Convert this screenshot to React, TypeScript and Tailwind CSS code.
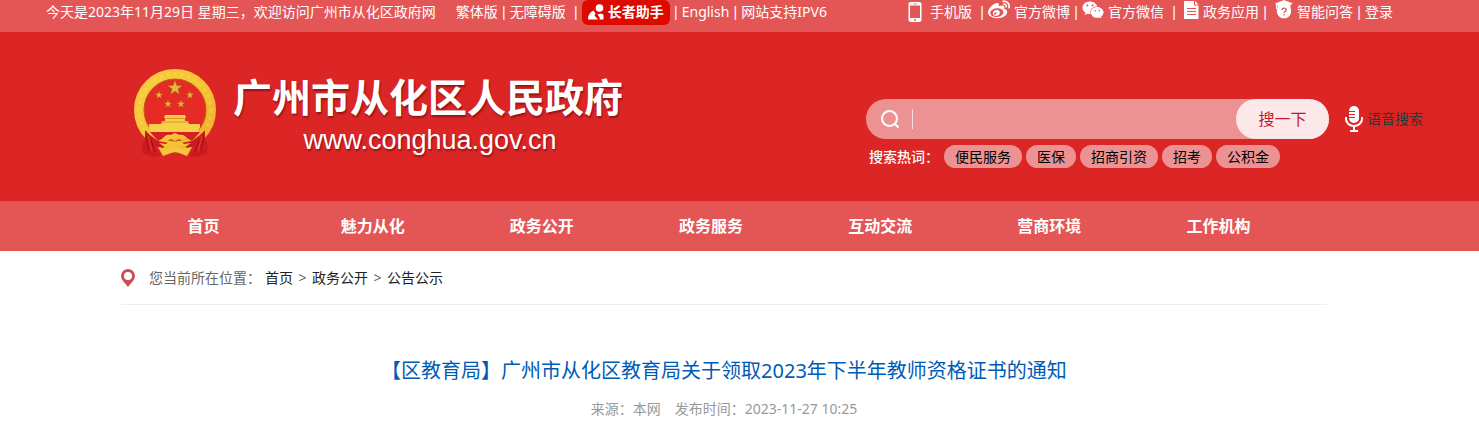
import type { FormEvent, ReactNode } from 'react';
import { FaWeixin, FaWeibo } from 'react-icons/fa';

const navItems = ['首页', '魅力从化', '政务公开', '政务服务', '互动交流', '营商环境', '工作机构'];

const hotWords = ['便民服务', '医保', '招商引资', '招考', '公积金'];

const crumbs = ['首页', '政务公开', '公告公示'];

function Sep() {
  return (
    <span aria-hidden className="w-3 text-center font-['Liberation_Sans']">
      |
    </span>
  );
}

function TopLink({ icon, children }: { icon?: ReactNode; children: ReactNode }) {
  return (
    <a href="#" className="flex items-center gap-1 hover:underline">
      {icon}
      <span>{children}</span>
    </a>
  );
}

function ElderIcon() {
  return (
    <svg width="16" height="16" viewBox="0 0 16 16" fill="#fff" aria-hidden>
      <circle cx="11.500" cy="4" r="3.800" />
      <path d="M0 15.500C0 11.500 2 8 5.500 6.500L7.500 9.500 6.500 11.500 10 15.500Z" />
      <path d="M9.500 10.500c2-1.200 5.500-1 6 .500v4.500h-4c1-1.500-.5-3-2-5z" />
    </svg>
  );
}

function PhoneIcon() {
  return (
    <svg width="14" height="20" viewBox="0 0 14 20" aria-hidden className="mr-1">
      <path
        fill="#fff"
        fillRule="evenodd"
        d="M2.500 0h9A2 2 0 0 1 13.500 2v16a2 2 0 0 1-2 2h-9a2 2 0 0 1-2-2V2a2 2 0 0 1 2-2zM2 3.500v12.500h10v-12.500zM5 1.500v.8h4v-.8zM7 17a1 1 0 1 0 0 2a1 1 0 0 0 0-2z"
      />
    </svg>
  );
}

function DocIcon() {
  return (
    <svg width="15" height="18" viewBox="0 0 15 18" className="mb-1" aria-hidden>
      <path fill="#fff" d="M0 0h10v4.500h4.500V18H0zM11 0l3.500 3.500H11z" />
      <path stroke="#e45656" d="M3 7.500h9M3 10.500h9M3 13.500h9" />
    </svg>
  );
}

function GraduateIcon() {
  return (
    <svg width="18" height="20" viewBox="0 0 18 20" className="mb-1" aria-hidden>
      <path fill="#fff" d="M9 0l9 3.500-2.500 1.200V8A7.200 7.200 0 1 1 2.500 8V5.200L2 5v4H1V4.500L0 3.500z" />
      <path
        fill="none"
        stroke="#e45656"
        strokeWidth="1.400"
        d="M7 10c0-2.500 4.200-2.500 4.200 0c0 1.500-2.100 1.500-2.100 3M9.100 14v1.500"
      />
    </svg>
  );
}

function MicIcon() {
  return (
    <svg width="18" height="26" viewBox="0 0 18 26" fill="none" aria-hidden>
      <rect x="4" y="0" width="10" height="17" rx="5" fill="#fff" />
      <path stroke="#dc2626" d="M4 5.500h6M4 8.500h6M4 11.500h6" />
      <path stroke="#fff" strokeWidth="2" d="M1 11v2a8 7 0 0 0 16 0v-2M9 20v5M5 25h8" />
    </svg>
  );
}

function Emblem() {
  const star = 'M0-10L2.400-3.100 9.500-3.100 3.800 1.200 5.900 8.100 0 4-5.900 8.100-3.800 1.200-9.500-3.100-2.400-3.100Z';
  return (
    <svg width="84" height="90" viewBox="0 0 84 90" role="img" aria-label="国徽">
      <defs>
        <linearGradient id="gold" x1="0" y1="0" x2="1" y2="1">
          <stop offset="0" stopColor="#f9cf3f" />
          <stop offset="0.500" stopColor="#f5c335" />
          <stop offset="1" stopColor="#efb02a" />
        </linearGradient>
      </defs>
      <circle cx="42" cy="42" r="32" fill="#e62a26" />
      <circle cx="42" cy="42" r="36" fill="none" stroke="url(#gold)" strokeWidth="10" />
      <circle cx="42" cy="42" r="31" fill="none" stroke="#b9601c" strokeWidth="1" />
      <circle cx="42" cy="42" r="36" fill="none" stroke="#fbdc62" strokeWidth="3" strokeDasharray="3 4" opacity="0.400" />
      <g fill="#e8b43c" stroke="#8f5a22" strokeWidth="0.600">
        <path d={star} transform="translate(42 20) scale(.8)" />
        <path d={star} transform="translate(26 27) scale(.42)" />
        <path d={star} transform="translate(57 27) scale(.42)" />
        <path d={star} transform="translate(35 36) scale(.42)" />
        <path d={star} transform="translate(48 36) scale(.42)" />
      </g>
      <path fill="#f7cf48" d="M32 47h20l1 3h-1v3h3l1 3h11v3l-2 5H18l-2-5v-3h12l1-3h3v-3h-1z" />
      <path stroke="#d8861e" strokeWidth="0.800" d="M32 50.500h20M29 54h26" />
      <path fill="#d42022" d="M17 64h50l-8 9-9-5-8-3-8 3-9 5z" />
      {/* ribbons hanging from both sides of the wheat ring */}
      <path fill="#cc1b20" d="M12 62l5 5 8 6 11 2-6 5-8-1 6 9-9 1-4-2-5-1-1-8 3-7zM72 62l-5 5-8 6-11 2 6 5 8-1-6 9 9 1 4-2 5-1 1-8-3-7z" />
      <path fill="none" stroke="#9c1016" d="M13 68l3 15M18 72l4 12M71 68l-3 15M66 72l-4 12" />
      <path fill="none" stroke="#ef3a34" d="M15 68l4 15M69 68l-4 15" />
      {/* bow and gear at the foot */}
      <path fill="url(#gold)" d="M29 71c3-4 6-5 9-4l4-2 4 2c3-1 6 0 9 4l-4 3-5-3-4 2-4-2-5 3z" />
      <path fill="url(#gold)" d="M33 76l4-3 5 2 5-2 4 3 7-1-7 5-5-1-4-1-4 1-5 1-7-5z" />
      <path fill="#f4c63e" d="M25 79l9 2c5-3 11-3 16 0l9-2-5 9-8-3c-3-1-5-1-8 0l-8 3z" />
    </svg>
  );
}

function TopBar() {
  return (
    <div className="flex h-8 flex-wrap justify-between bg-[#e45656] pr-[86px] pl-[46px] text-sm text-white">
      <div className="flex h-6 items-center">
        <span className="mr-5">今天是2023年11月29日 星期三，欢迎访问广州市从化区政府网</span>
        <TopLink>繁体版</TopLink>
        <Sep />
        <TopLink>无障碍版</TopLink>
        <span className="ml-1 flex">
          <Sep />
        </span>
        <button
          type="button"
          className="flex h-[25px] items-center gap-1 rounded-md bg-[#dd0a00] px-1.5 font-bold whitespace-nowrap"
        >
          <ElderIcon />
          <span>长者助手</span>
        </button>
        <Sep />
        <TopLink>English</TopLink>
        <Sep />
        <TopLink>网站支持IPV6</TopLink>
      </div>
      <div className="flex h-6 items-center">
        <TopLink icon={<PhoneIcon />}>手机版</TopLink>
        <span className="ml-1 flex">
          <Sep />
        </span>
        <TopLink icon={<FaWeibo size={22} className="mb-1" />}>官方微博</TopLink>
        <Sep />
        <TopLink icon={<FaWeixin size={22} className="mb-1" />}>官方微信</TopLink>
        <span className="mr-1 ml-1 flex">
          <Sep />
        </span>
        <TopLink icon={<DocIcon />}>政务应用</TopLink>
        <span className="mr-1 flex">
          <Sep />
        </span>
        <TopLink icon={<GraduateIcon />}>智能问答</TopLink>
        <Sep />
        <TopLink>登录</TopLink>
      </div>
    </div>
  );
}

function SearchBox() {
  const handleSubmit = (event: FormEvent) => event.preventDefault();

  return (
    <div className="pt-[67px]">
      <div className="flex items-center gap-4">
        <form
          onSubmit={handleSubmit}
          className="flex h-10 w-[463px] items-center rounded-full bg-[#ed9292]"
        >
          <svg width="20" height="20" viewBox="0 0 20 20" fill="none" stroke="#fff" strokeWidth="2" className="ml-3.5 shrink-0" aria-hidden>
            <circle cx="9.500" cy="9.500" r="7.500" />
            <path d="M14.500 14.500l4 4" />
          </svg>
          <span className="ml-3 h-5 w-px bg-white/70" />
          <input type="text" aria-label="搜索" className="h-10 min-w-0 flex-1 px-3 text-sm text-white outline-none" />
          <button type="submit" className="h-10 w-[93px] rounded-full bg-[#fce8e8] text-base text-[#c01830]">
            搜一下
          </button>
        </form>
        <a href="#" className="flex items-center gap-1 text-sm text-[#333]">
          <MicIcon />
          <span>语音搜索</span>
        </a>
      </div>
      <div className="mt-1.5 flex items-center gap-1 pl-[3px] text-sm">
        <span className="mr-px font-medium text-white">搜索热词：</span>
        {hotWords.map((word) => (
          <a key={word} href="#" className="h-[23px] rounded-full bg-[#ed9292] px-[11px] leading-[23px] text-black">
            {word}
          </a>
        ))}
      </div>
    </div>
  );
}

function Header() {
  return (
    <header className="bg-[#dc2626]">
      <TopBar />
      <div className="flex h-[169px] justify-between pr-14 pl-[133px]">
        <a href="#" className="flex items-start gap-4 pt-9 text-white">
          <Emblem />
          <span className="flex flex-col items-center pt-1.5 [text-shadow:1px_2px_2px_rgba(80,0,0,0.5)]">
            <span className="text-[39px] leading-[46px] font-bold whitespace-nowrap">广州市从化区人民政府</span>
            <span className="pt-1 pl-1 font-['Liberation_Sans'] text-[27px] leading-8">www.conghua.gov.cn</span>
          </span>
        </a>
        <SearchBox />
      </div>
      <nav className="bg-[#e45656] pr-[176px] pl-[119px]">
        <ul className="grid h-[50px] grid-cols-7 items-center text-center text-base font-bold text-white">
          {navItems.map((item) => (
            <li key={item}>
              <a href="#">{item}</a>
            </li>
          ))}
        </ul>
      </nav>
    </header>
  );
}

function Breadcrumb() {
  return (
    <div className="flex h-[54px] items-center border-b border-[#eee] text-sm text-[#666]">
      <svg width="14" height="18" viewBox="0 0 14 18" className="mr-3.5" aria-hidden>
        <path
          fill="#cb5050"
          fillRule="evenodd"
          d="M7 0a7 7 0 0 1 7 7c0 4-4.500 7.500-7 11C4.500 14.500 0 11 0 7a7 7 0 0 1 7-7zM7 3a4 4 0 1 0 0 8a4 4 0 0 0 0-8z"
        />
      </svg>
      <span className="mr-1">您当前所在位置：</span>
      {crumbs.map((crumb, i) => (
        <span key={crumb} className="flex">
          {i > 0 && <span className="w-[19px] text-center">&gt;</span>}
          <a href="#" className="text-[#222]">
            {crumb}
          </a>
        </span>
      ))}
    </div>
  );
}

export default function App() {
  return (
    <div className="min-h-screen bg-white font-['Noto_Sans','Noto_Sans_CJK_SC',sans-serif]">
      <Header />
      <main className="pr-[152px] pl-[121px]">
        <Breadcrumb />
        <article className="pt-[50px] text-center">
          <h1 className="text-xl leading-8 text-[#005bb5]">
            【区教育局】广州市从化区教育局关于领取2023年下半年教师资格证书的通知
          </h1>
          <p className="mt-3 flex justify-center gap-3.5 text-sm text-[#999]">
            <span>来源：本网</span>
            <span>发布时间：2023-11-27 10:25</span>
          </p>
        </article>
      </main>
    </div>
  );
}
